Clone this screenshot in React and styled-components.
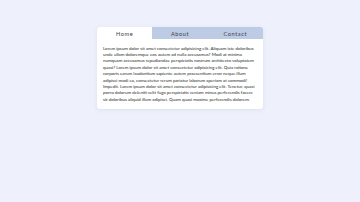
import React, { useState } from 'react';
import styled, { createGlobalStyle } from 'styled-components';

const GlobalStyle = createGlobalStyle`
  html, body {
    margin: 0;
    padding: 0;
    background: #eef1fb;
  }
`;

const tabs = ['Home', 'About', 'Contact'];

const text =
  'Lorem ipsum dolor sit amet consectetur adipisicing elit. Aliquam iste doloribus unde ullam doloremque eos autem ad nulla accusamus? Modi at minima numquam accusamus repudiandae perspiciatis nostrum architecto voluptatem quasi? Lorem ipsum dolor sit amet consectetur adipisicing elit. Quia ratione corporis earum laudantium sapiente autem praesentium error neque illum adipisci modi ea, consectetur rerum pariatur laborum aperiam at commodi! Impedit. Lorem ipsum dolor sit amet consectetur adipisicing elit. Tenetur, quasi porro dolorum deleniti velit fuga perspiciatis veniam minus perferendis facere sit doloribus aliquid illum adipisci. Quam quasi maxime perferendis dolorem.';

function App() {
  const [active, setActive] = useState(0);
  return (
    <>
      <GlobalStyle />
      <Page>
        <Card>
          <TabBar>
            {tabs.map((t, i) => (
              <Tab key={t} $active={i === active} onClick={() => setActive(i)}>
                {t}
              </Tab>
            ))}
          </TabBar>
          <Content>{text}</Content>
        </Card>
      </Page>
    </>
  );
}

export default App;

const Page = styled.div`
  width: 360px;
  height: 202px;
  display: flex;
  justify-content: center;
  align-items: flex-start;
  padding-top: 27px;
  box-sizing: border-box;
  font-family: Lato, "Open Sans", sans-serif;
`;

const Card = styled.div`
  width: 166px;
  background: #fff;
  border-radius: 3px;
  box-shadow: 0 1px 4px rgba(80, 100, 150, 0.12);
  overflow: hidden;
`;

const TabBar = styled.div`
  display: grid;
  grid-template-columns: repeat(3, 1fr);
  background: #bdcbe4;
`;

const Tab = styled.div`
  height: 12px;
  display: flex;
  align-items: center;
  justify-content: center;
  font-size: 5.6px;
  letter-spacing: 0.6px;
  color: #3c3e46;
  background: ${(p) => (p.$active ? '#fff' : 'transparent')};
  cursor: pointer;
`;

const Content = styled.p`
  margin: 0;
  padding: 6.5px 6px 5.5px 6px;
  font-size: 4.45px;
  line-height: 6.4px;
  color: #1e1f24;
`;
